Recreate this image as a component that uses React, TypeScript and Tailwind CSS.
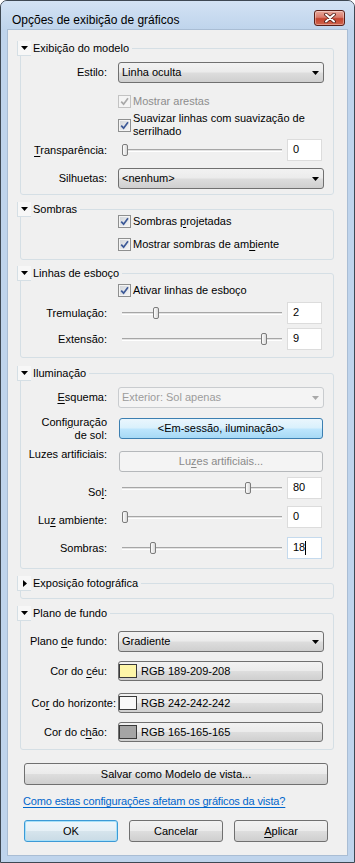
import React from "react";

const btnGrad =
  "bg-[linear-gradient(#f2f2f2_0%,#ebebeb_48%,#dddddd_52%,#cfcfcf_100%)]";

function Tri({ open = true }: { open?: boolean }) {
  return (
    <span className="w-[14px] h-[15px] border-l border-b border-[#d5dfe5] bg-[#f7f7f7] flex items-center justify-center shrink-0">
      {open ? (
        <svg width="7" height="4" viewBox="0 0 7 4">
          <path d="M0 0H7L3.5 4Z" fill="#000" />
        </svg>
      ) : (
        <svg width="4" height="7" viewBox="0 0 4 7">
          <path d="M0 0V7L4 3.5Z" fill="#000" />
        </svg>
      )}
    </span>
  );
}

function Section({
  title,
  open = true,
  className = "",
  children,
}: {
  title: string;
  open?: boolean;
  className?: string;
  children?: React.ReactNode;
}) {
  return (
    <fieldset
      className={`ml-[12px] mr-[13px] border border-[#d5dfe5] rounded-[3px] pl-0 pr-[9px] min-w-0 ${className}`}
    >
      <legend className="-ml-[4px] pr-[3px] p-0">
        <span className="flex items-center h-[15px]">
          <Tri open={open} />
          <span className="ml-[2px] leading-[13px]">{title}</span>
        </span>
      </legend>
      {children}
    </fieldset>
  );
}

function Label({
  children,
  className = "",
}: {
  children: React.ReactNode;
  className?: string;
}) {
  return (
    <div
      className={`w-[86px] shrink-0 text-right whitespace-nowrap leading-[13px] ${className}`}
    >
      {children}
    </div>
  );
}

function Select({ value, disabled }: { value: string; disabled?: boolean }) {
  return (
    <div
      className={`h-[21px] rounded-[3px] border flex items-center pl-[3px] pr-[4px] ${
        disabled
          ? "border-[#c9cccf] bg-[#f4f4f4] text-[#9c9c9c]"
          : `border-[#707070] ${btnGrad}`
      }`}
    >
      <span className="flex-1 leading-[13px]">{value}</span>
      <svg width="7" height="4" viewBox="0 0 7 4">
        <path d="M0 0H7L3.5 4Z" fill={disabled ? "#a8a8a8" : "#000"} />
      </svg>
    </div>
  );
}

function Check({ disabled }: { disabled?: boolean }) {
  return (
    <span
      className={`w-[13px] h-[13px] border shrink-0 flex items-center justify-center ${
        disabled
          ? "border-[#c3c3c3] bg-[#f4f4f4]"
          : "border-[#8e8f8f] bg-[linear-gradient(135deg,#cfd3d8,#f7f7f7)] shadow-[inset_0_0_0_1px_#f4f4f4]"
      }`}
    >
      <svg width="9" height="9" viewBox="0 0 9 9">
        <path
          d="M1.2 4.6L3.6 7.2L8 1.2"
          stroke={disabled ? "#a9a9a9" : "#3d5a98"}
          strokeWidth="1.7"
          fill="none"
        />
      </svg>
    </span>
  );
}

function Slider({ frac }: { frac: number }) {
  const left = 4 + frac * 154;
  return (
    <div className="relative w-[168px] h-[22px] flex items-center shrink-0">
      <div className="mx-[4px] flex-1 h-[3px] border-t border-[#a6a6a6] border-b border-b-[#ffffff] bg-[#e3e3e3]" />
      <div
        className="absolute top-[5px] w-[6px] h-[12px] rounded-[2px] border border-[#7c7c7c] bg-[linear-gradient(90deg,#fdfdfd,#d9d9d9)]"
        style={{ left }}
      />
    </div>
  );
}

function Num({
  v,
  focus,
  caret,
}: {
  v: string;
  focus?: boolean;
  caret?: boolean;
}) {
  return (
    <div
      className={`w-[35px] h-[22px] ml-[1px] bg-white border pl-[5px] pt-[3px] leading-[13px] flex items-start ${
        focus ? "border-[#c5daed]" : "border-[#dcdcdc]"
      }`}
    >
      <span>{v}</span>
      {caret && <span className="inline-block w-[1px] h-[14px] bg-black" />}
    </div>
  );
}

function SliderRow({
  label,
  frac,
  v,
  className = "",
  labelClass = "",
  focus,
  caret,
}: {
  label: React.ReactNode;
  frac: number;
  v: string;
  className?: string;
  labelClass?: string;
  focus?: boolean;
  caret?: boolean;
}) {
  return (
    <div className={`flex items-center h-[22px] ${className}`}>
      <Label className={labelClass}>{label}</Label>
      <div className="ml-[11px] flex items-center">
        <Slider frac={frac} />
        <Num v={v} focus={focus} caret={caret} />
      </div>
    </div>
  );
}

function CheckRow({
  children,
  className = "",
  disabled,
}: {
  children: React.ReactNode;
  className?: string;
  disabled?: boolean;
}) {
  return (
    <div className={`flex items-center h-[16px] ml-[97px] ${className}`}>
      <Check disabled={disabled} />
      <span
        className={`ml-[2px] leading-[13px] ${disabled ? "text-[#8d8d8d]" : ""}`}
      >
        {children}
      </span>
    </div>
  );
}

function ColorRow({
  label,
  color,
  text,
  className = "",
  wide,
}: {
  label: React.ReactNode;
  color: string;
  text: string;
  className?: string;
  wide?: boolean;
}) {
  return (
    <div className={`flex items-center h-[20px] ${className}`}>
      {wide ? (
        <div className="w-[95px] shrink-0 text-right whitespace-nowrap leading-[13px]">
          {label}
        </div>
      ) : (
        <Label>{label}</Label>
      )}
      <div
        className={`${wide ? "ml-[2px]" : "ml-[11px]"} w-[205px] h-[20px] rounded-[3px] border border-[#707070] ${btnGrad} flex items-center`}
      >
        <span
          className="w-[18px] h-[14px] border border-[#3a3a3a] shrink-0"
          style={{ backgroundColor: color }}
        />
        <span className="ml-[4px] leading-[13px]">{text}</span>
      </div>
    </div>
  );
}

export default function App() {
  return (
    <div className="w-[355px] h-[863px] font-['Liberation_Sans',Arial,sans-serif] text-[11px] text-black">
      <div className="w-full h-full border border-[#3e4853] rounded-t-[7px] bg-[#bfd4ec] flex flex-col overflow-hidden">
        {/* title bar */}
        <div className="h-[28px] shrink-0 flex items-start justify-between pl-[11px] pr-[9px] bg-[linear-gradient(#d3e2f4,#bfd4ec)]">
          <span className="mt-[12px] text-[12px] leading-[14px]">
            Opções de exibição de gráficos
          </span>
          <div className="mt-[9px] w-[31px] h-[16px] rounded-[3px] border border-[#5a1f18] bg-[linear-gradient(#e9a99c_0%,#d97b6c_45%,#c4442f_55%,#d0654d_100%)] shadow-[inset_0_0_0_1px_rgba(255,255,255,0.35)] flex items-center justify-center">
            <svg width="12" height="10" viewBox="0 0 12 10">
              <path
                d="M2 1.5L10 8.5M10 1.5L2 8.5"
                stroke="#4a1a14"
                strokeWidth="3.6"
                strokeLinecap="round"
              />
              <path
                d="M2 1.5L10 8.5M10 1.5L2 8.5"
                stroke="#ffffff"
                strokeWidth="2"
                strokeLinecap="round"
              />
            </svg>
          </div>
        </div>

        {/* content */}
        <div className="flex-1 mx-[6px] mb-[6px] bg-[#f0f0f0] border border-[#a9bdd4] flex flex-col">
          {/* Exibição do modelo */}
          <Section title="Exibição do modelo" className="mt-[11px] pb-[5px]">
            <div className="flex items-center h-[21px] mt-[6px]">
              <Label>Estilo:</Label>
              <div className="ml-[11px] flex-1">
                <Select value="Linha oculta" />
              </div>
            </div>
            <div className="flex items-center h-[13px] mt-[12px] ml-[97px]">
              <Check disabled />
              <span className="ml-[2px] leading-[13px] text-[#8d8d8d]">
                Mostrar arestas
              </span>
            </div>
            <div className="flex items-center h-[26px] mt-[4px] ml-[97px]">
              <Check />
              <span className="ml-[2px] leading-[13px]">
                Suavizar linhas com suavização de
                <br />
                serrilhado
              </span>
            </div>
            <SliderRow
              className="mt-[1px]"
              label={
                <>
                  <u className="underline-offset-2">T</u>ransparência:
                </>
              }
              frac={0}
              v="0"
            />
            <div className="flex items-center h-[21px] mt-[7px]">
              <Label>Silhuetas:</Label>
              <div className="ml-[11px] flex-1">
                <Select value="<nenhum>" />
              </div>
            </div>
          </Section>

          {/* Sombras */}
          <Section title="Sombras" className="mt-[7px] pb-[7px]">
            <CheckRow className="-mt-[4px]">
              Sombras <u className="underline-offset-2">p</u>rojetadas
            </CheckRow>
            <CheckRow className="mt-[7px]">
              Mostrar sombras de am<u className="underline-offset-2">b</u>
              iente
            </CheckRow>
          </Section>

          {/* Linhas de esboço */}
          <Section title="Linhas de esboço" className="mt-[6px] pb-[7px]">
            <CheckRow className="mt-[1px]">Ativar linhas de esboço</CheckRow>
            <SliderRow className="mt-[4px]" label="Tremulação:" frac={0.2} v="2" />
            <SliderRow className="mt-[4px]" label="Extensão:" frac={0.9} v="9" />
          </Section>

          {/* Iluminação */}
          <Section title="Iluminação" className="mt-[8px] pb-[9px]">
            <div className="flex items-center h-[21px] mt-[6px]">
              <Label>
                <u className="underline-offset-2">E</u>squema:
              </Label>
              <div className="ml-[11px] flex-1">
                <Select value="Exterior: Sol apenas" disabled />
              </div>
            </div>
            <div className="flex items-center h-[21px] mt-[10px]">
              <Label>
                Confi<u className="underline-offset-2">g</u>uração
                <br />
                de sol:
              </Label>
              <div className="ml-[12px] w-[204px] h-[21px] rounded-[3px] border border-[#3c7fb1] bg-[linear-gradient(#eaf6fd_0%,#d9f0fc_48%,#bee6fd_52%,#a7d9f5_100%)] flex items-center justify-center leading-[13px]">
                &lt;Em-sessão, iluminação&gt;
              </div>
            </div>
            <div className="flex items-start h-[21px] mt-[12px]">
              <Label className="-mt-[3px]">Luzes artificiais:</Label>
              <div className="ml-[12px] w-[204px] h-[21px] rounded-[3px] border border-[#b5b8bb] bg-[#f4f4f4] text-[#8a8a8a] flex items-center justify-center leading-[13px]">
                Lu<u className="underline-offset-2">z</u>es artificiais...
              </div>
            </div>
            <SliderRow
              className="mt-[5px]"
              labelClass="mt-[8px]"
              label={
                <>
                  So<u className="underline-offset-2">l</u>:
                </>
              }
              frac={0.8}
              v="80"
            />
            <SliderRow
              className="mt-[7px]"
              labelClass="mt-[6px]"
              label={
                <>
                  Lu<u className="underline-offset-2">z</u> ambiente:
                </>
              }
              frac={0}
              v="0"
            />
            <SliderRow
              className="mt-[9px]"
              label="Sombras:"
              frac={0.18}
              v="18"
              focus
              caret
            />
          </Section>

          {/* Exposição fotográfica */}
          <Section
            title="Exposição fotográfica"
            open={false}
            className="mt-[7px] pb-[7px]"
          />

          {/* Plano de fundo */}
          <Section title="Plano de fundo" className="mt-[7px] pb-[7px]">
            <div className="flex items-center h-[21px] mt-[10px]">
              <Label>
                Plano <u className="underline-offset-2">d</u>e fundo:
              </Label>
              <div className="ml-[11px] flex-1">
                <Select value="Gradiente" />
              </div>
            </div>
            <ColorRow
              className="mt-[9px]"
              label={
                <>
                  Cor do <u className="underline-offset-2">c</u>éu:
                </>
              }
              color="#fef6a8"
              text="RGB 189-209-208"
            />
            <ColorRow
              className="mt-[12px]"
              wide
              label={
                <>
                  Co<u className="underline-offset-2">r</u> do horizonte:
                </>
              }
              color="#f8f8f8"
              text="RGB 242-242-242"
            />
            <ColorRow
              className="mt-[9px]"
              label={
                <>
                  Cor do c<u className="underline-offset-2">h</u>ão:
                </>
              }
              color="#a5a5a5"
              text="RGB 165-165-165"
            />
          </Section>

          <div
            className={`mt-[13px] ml-[16px] w-[304px] h-[22px] rounded-[3px] border border-[#707070] ${btnGrad} flex items-center justify-center leading-[13px]`}
          >
            Salvar como Modelo de vista...
          </div>

          <div className="mt-[10px] ml-[15px] leading-[13px] tracking-[-0.15px] text-[#0066cc] underline underline-offset-2">
            Como estas configurações afetam os gráficos da vista?
          </div>

          <div className="mt-[12px] ml-[16px] w-[304px] flex gap-[11px]">
            <div className="w-[94px] h-[22px] rounded-[3px] border border-[#3c9ad6] shadow-[inset_0_0_0_1px_#a8e0f8] bg-[linear-gradient(#eef6fb_0%,#e6f0f6_48%,#d6e4ec_52%,#c9dbe6_100%)] flex items-center justify-center leading-[13px]">
              OK
            </div>
            <div
              className={`w-[94px] h-[22px] rounded-[3px] border border-[#707070] ${btnGrad} flex items-center justify-center leading-[13px]`}
            >
              Cancelar
            </div>
            <div
              className={`w-[94px] h-[22px] rounded-[3px] border border-[#707070] ${btnGrad} flex items-center justify-center leading-[13px]`}
            >
              <span>
                <u className="underline-offset-2">A</u>plicar
              </span>
            </div>
          </div>
        </div>
      </div>
    </div>
  );
}
